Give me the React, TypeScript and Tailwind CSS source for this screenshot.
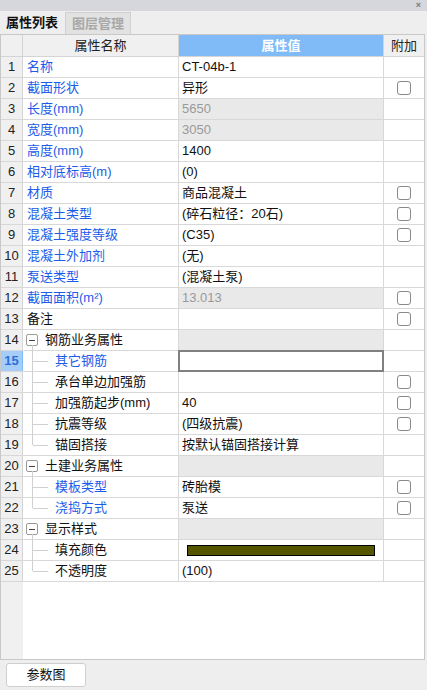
import React from "react";

type Row = {
  n: number;
  name: string;
  value?: string;
  blue?: boolean;
  ro?: boolean;
  check?: boolean;
  group?: boolean;
  child?: "mid" | "last";
  editing?: boolean;
  color?: boolean;
};

const rows: Row[] = [
  { n: 1, name: "名称", value: "CT-04b-1", blue: true },
  { n: 2, name: "截面形状", value: "异形", blue: true, check: true },
  { n: 3, name: "长度(mm)", value: "5650", blue: true, ro: true },
  { n: 4, name: "宽度(mm)", value: "3050", blue: true, ro: true },
  { n: 5, name: "高度(mm)", value: "1400", blue: true },
  { n: 6, name: "相对底标高(m)", value: "(0)", blue: true },
  { n: 7, name: "材质", value: "商品混凝土", blue: true, check: true },
  { n: 8, name: "混凝土类型", value: "(碎石粒径：20石)", blue: true, check: true },
  { n: 9, name: "混凝土强度等级", value: "(C35)", blue: true, check: true },
  { n: 10, name: "混凝土外加剂", value: "(无)", blue: true },
  { n: 11, name: "泵送类型", value: "(混凝土泵)", blue: true },
  { n: 12, name: "截面面积(m²)", value: "13.013", blue: true, ro: true, check: true },
  { n: 13, name: "备注", value: "", check: true },
  { n: 14, name: "钢筋业务属性", group: true },
  { n: 15, name: "其它钢筋", blue: true, child: "mid", editing: true },
  { n: 16, name: "承台单边加强筋", child: "mid", check: true },
  { n: 17, name: "加强筋起步(mm)", value: "40", child: "mid", check: true },
  { n: 18, name: "抗震等级", value: "(四级抗震)", child: "mid", check: true },
  { n: 19, name: "锚固搭接", value: "按默认锚固搭接计算", child: "last" },
  { n: 20, name: "土建业务属性", group: true },
  { n: 21, name: "模板类型", value: "砖胎模", blue: true, child: "mid", check: true },
  { n: 22, name: "浇捣方式", value: "泵送", blue: true, child: "last", check: true },
  { n: 23, name: "显示样式", group: true },
  { n: 24, name: "填充颜色", child: "mid", color: true },
  { n: 25, name: "不透明度", value: "(100)", child: "last" },
];

const font = {
  fontFamily: '"Liberation Sans", "Noto Sans CJK SC", sans-serif',
};

function CheckBox() {
  return <div className="w-[14px] h-[14px] rounded-[3px] border border-[#8a8a8a] bg-white" />;
}

function NameCell({ r }: { r: Row }) {
  const color = r.blue ? "text-[#1c5ce8]" : "text-[#111]";
  if (r.group) {
    return (
      <div className="relative flex items-center h-full pl-[3px]">
        <div className="w-[12px] h-[12px] border border-[#9a9a9a] rounded-[2px] bg-white flex items-center justify-center">
          <div className="w-[6px] h-px bg-[#444]" />
        </div>
        <span className="ml-[7px] text-[#111]">{r.name}</span>
        <div className="absolute left-[9px] top-[15px] bottom-[-1px] w-px bg-[#d0d0d0]" />
      </div>
    );
  }
  if (r.child) {
    return (
      <div className="relative flex items-center h-full">
        <div
          className={`absolute left-[9px] top-[-1px] w-px bg-[#d0d0d0] ${
            r.child === "last" ? "h-[11px]" : "bottom-[-1px]"
          }`}
        />
        <div className="absolute left-[10px] top-[10px] w-[15px] h-px bg-[#d0d0d0]" />
        <span className={`ml-[32px] ${color}`}>{r.name}</span>
      </div>
    );
  }
  return (
    <div className="flex items-center h-full pl-[4px]">
      <span className={color}>{r.name}</span>
    </div>
  );
}

export default function App() {
  return (
    <div className="w-[427px] h-[690px] bg-[#eeeeee] flex flex-col text-[13px] overflow-hidden" style={font}>
      {/* top bar */}
      <div className="h-[11px] bg-[#d6d7dc] flex items-center justify-end pr-[6px]">
        <span className="text-[9px] leading-none font-bold text-[#7a7a7a]">×</span>
      </div>
      {/* tabs */}
      <div className="h-[23px] flex items-end bg-[#eeeeee]">
        <div className="h-[22px] w-[64px] flex items-center justify-center font-bold text-[#111] bg-[#eeeeee]">
          属性列表
        </div>
        <div className="h-[22px] w-[66px] ml-[1px] flex items-center justify-center text-[#a8a8a8] bg-[#e2e2e2] border border-b-0 border-[#d0d0d0] font-bold">
          图层管理
        </div>
      </div>
      {/* table */}
      <div className="h-[626px] w-[425px] border border-[#c8c8c8] bg-white flex flex-col">
        {/* header */}
        <div className="h-[22px] flex border-b border-[#d4d4d4] shrink-0">
          <div className="w-[22px] bg-[#f0f0f0] border-r border-[#d4d4d4]" />
          <div className="w-[156px] bg-[#f0f0f0] border-r border-[#d4d4d4] flex items-center justify-center text-[#222]">
            属性名称
          </div>
          <div className="w-[205px] bg-[#80bbf8] border-r border-[#d4d4d4] flex items-center justify-center text-white font-bold">
            属性值
          </div>
          <div className="w-[40px] bg-[#f0f0f0] flex items-center justify-center text-[#222]">附加</div>
        </div>
        {rows.map((r) => (
          <div key={r.n} className="h-[21px] flex border-b border-[#d8d8d8] shrink-0">
            <div
              className={`w-[22px] border-r flex items-center justify-center ${
                r.editing
                  ? "bg-[#a6cdf7] border-[#80bbf8] text-[#2a6fd6] font-bold"
                  : "bg-[#f0f0f0] border-[#d4d4d4] text-[#222]"
              }`}
            >
              {r.n}
            </div>
            <div className="w-[156px] border-r border-[#d8d8d8]">
              <NameCell r={r} />
            </div>
            <div
              className={`relative w-[205px] border-r border-[#d8d8d8] flex items-center ${
                r.ro || r.group ? "bg-[#e9e9e9]" : "bg-white"
              }`}
            >
              {r.editing && (
                <div className="absolute left-[-1px] top-[-1px] right-[-1px] bottom-[-1px] border-2 border-[#808080]" />
              )}
              {r.color ? (
                <div className="ml-[8px] w-[188px] h-[11px] bg-[#555500] border border-black" />
              ) : (
                <span className={`pl-[3px] ${r.ro ? "text-[#999]" : "text-[#111]"}`}>{r.value}</span>
              )}
            </div>
            <div className="w-[40px] flex items-center justify-center">{r.check && <CheckBox />}</div>
          </div>
        ))}
        <div className="flex-1 flex">
          <div className="w-[22px] bg-[#f0f0f0]" />
        </div>
      </div>
      {/* bottom */}
      <div className="flex-1 flex items-center pl-[6px]">
        <div className="w-[80px] h-[24px] bg-white border border-[#cfcfcf] rounded-[3px] flex items-center justify-center text-[#111]">
          参数图
        </div>
      </div>
    </div>
  );
}
